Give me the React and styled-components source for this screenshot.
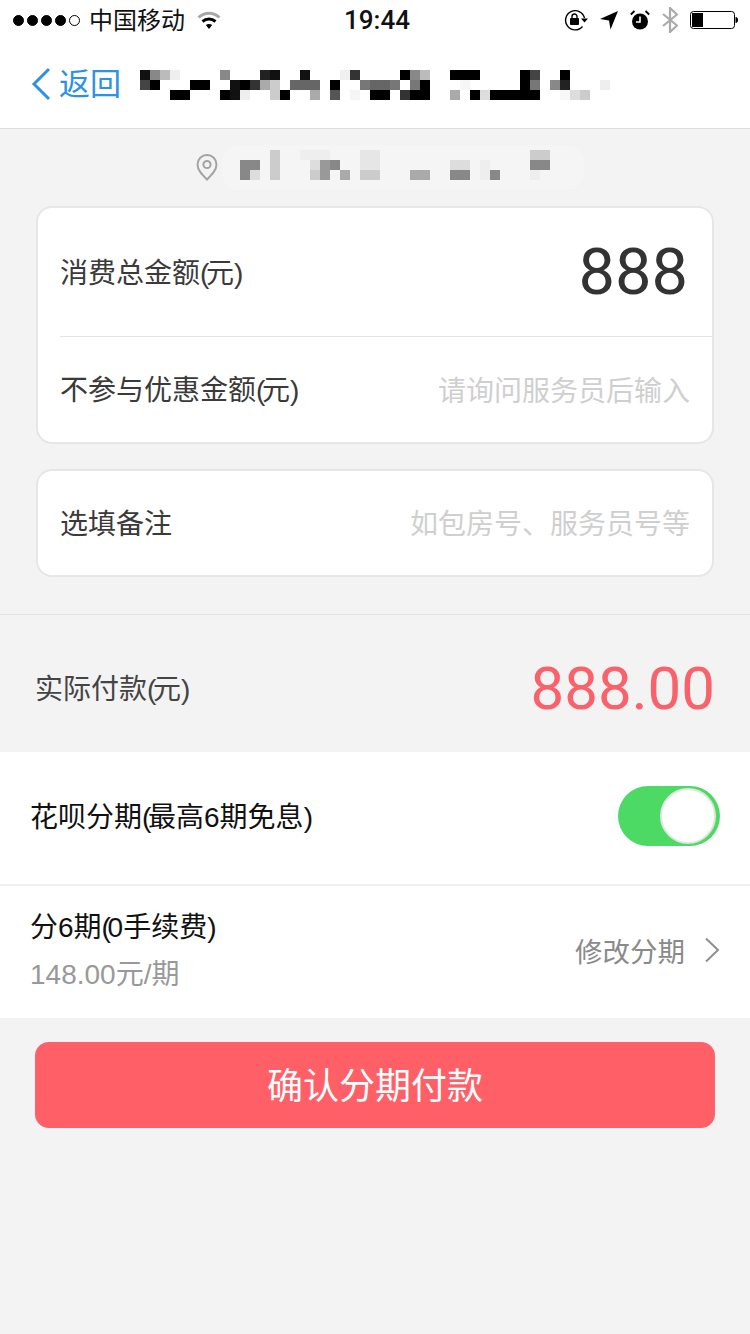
import styled, { createGlobalStyle } from 'styled-components';

const GlobalStyle = createGlobalStyle`
  html, body {
    margin: 0;
    padding: 0;
    background: #f3f3f3;
    font-family: "Liberation Sans", "Noto Sans CJK SC", sans-serif;
  }
  * {
    box-sizing: border-box;
  }
`;

// [x, y, color] cells of the pixelated name, 10px each, origin at (140, 70)
const titleCells = [
  [140, 70, '#111'], [150, 70, '#888'], [160, 70, '#bbb'], [170, 70, '#eee'],
  [220, 70, '#888'], [260, 70, '#222'], [270, 70, '#111'], [300, 70, '#111'], [340, 70, '#f0f0f0'], [350, 70, '#333'],
  [400, 70, '#000'], [410, 70, '#888'], [420, 70, '#bbb'],
  [450, 70, '#000'], [460, 70, '#000'], [470, 70, '#000'], [520, 70, '#000'], [530, 70, '#444'], [560, 70, '#000'],
  [140, 80, '#444'], [150, 80, '#000'], [190, 80, '#000'], [200, 80, '#000'], [230, 80, '#111'], [240, 80, '#000'],
  [250, 80, '#333'], [260, 80, '#aaa'], [270, 80, '#ccc'], [290, 80, '#666'], [300, 80, '#666'], [310, 80, '#666'],
  [330, 80, '#000'], [360, 80, '#777'], [370, 80, '#666'], [380, 80, '#666'], [390, 80, '#777'], [410, 80, '#777'], [420, 80, '#000'],
  [460, 80, '#f6f6f6'], [520, 80, '#000'], [530, 80, '#777'], [550, 80, '#888'], [560, 80, '#222'], [600, 80, '#eee'],
  [170, 90, '#000'], [180, 90, '#000'], [220, 90, '#000'], [230, 90, '#111'], [240, 90, '#eee'], [270, 90, '#ccc'],
  [280, 90, '#000'], [310, 90, '#aaa'], [330, 90, '#555'], [350, 90, '#f5f5f5'], [370, 90, '#000'], [380, 90, '#000'],
  [400, 90, '#333'], [410, 90, '#000'], [420, 90, '#000'], [450, 90, '#aaa'], [470, 90, '#000'], [480, 90, '#ddd'],
  [490, 90, '#000'], [500, 90, '#000'], [510, 90, '#000'], [520, 90, '#000'], [530, 90, '#000'],
  [560, 90, '#f8f8f8'], [570, 90, '#ddd'], [580, 90, '#ccc'],
];

// same for the address
const addressCells = [
  [270, 150, '#ccc'], [300, 150, '#eee'], [310, 150, '#eee'], [320, 150, '#eee'], [360, 150, '#e6e6e6'], [370, 150, '#e6e6e6'], [530, 150, '#ccc'], [540, 150, '#ccc'],
  [240, 160, '#888'], [250, 160, '#888'], [270, 160, '#ccc'], [310, 160, '#ddd'], [320, 160, '#999'], [330, 160, '#888'],
  [360, 160, '#e6e6e6'], [370, 160, '#e6e6e6'], [450, 160, '#ddd'], [460, 160, '#ddd'], [480, 160, '#eee'], [530, 160, '#888'], [540, 160, '#888'],
  [240, 170, '#888'], [250, 170, '#ddd'], [270, 170, '#ccc'], [310, 170, '#ccc'], [320, 170, '#999'], [340, 170, '#aaa'],
  [360, 170, '#ccc'], [370, 170, '#ccc'], [410, 170, '#aaa'], [420, 170, '#aaa'], [450, 170, '#888'], [460, 170, '#888'], [480, 170, '#eee'], [490, 170, '#888'], [530, 170, '#eee'],
];

const Page = styled.div`
  width: 750px;
  min-height: 1334px;
  background: #f3f3f3;
`;

const Header = styled.header`
  background: #fff;
  border-bottom: 1px solid #dedede;
`;

const StatusBar = styled.div`
  height: 40px;
  padding: 0 12px 0 13px;
  display: grid;
  grid-template-columns: 331px auto 1fr;
  align-items: center;
`;

const StatusLeft = styled.div`
  display: flex;
  align-items: center;
`;

const SignalDot = styled.span`
  width: 11px;
  height: 11px;
  margin-right: 3px;
  border-radius: 50%;
  background: ${(p) => (p.$off ? 'transparent' : '#000')};
  border: 1px solid #000;
`;

const Carrier = styled.span`
  margin: 0 12px 3px 6px;
  font-size: 24px;
  color: #111;
`;

const Clock = styled.span`
  font-family: "Roboto", sans-serif;
  font-size: 26px;
  font-weight: 500;
  color: #111;
`;

const StatusRight = styled.div`
  display: flex;
  align-items: center;
  justify-content: flex-end;
  gap: 12px;
`;

const NavBar = styled.nav`
  height: 88px;
  padding-left: 31px;
  display: flex;
  align-items: center;
`;

const BackLink = styled.a`
  display: flex;
  align-items: center;
  gap: 8px;
  width: 109px;
  font-size: 31px;
  color: #2b92e4;
`;

const BackLabel = styled.span`
  margin-bottom: 6px;
`;

const Mosaic = styled.svg`
  display: block;
  flex: none;
`;

const TitleMosaic = styled(Mosaic)`
  margin-top: 2px;
`;

const AddressBand = styled.div`
  height: 77px;
  padding-left: 196px;
  display: flex;
  align-items: center;
  gap: 4px;
`;

const Card = styled.section`
  margin: 0 36px ${(p) => p.$gap || 0}px;
  background: #fff;
  border: 2px solid #e6e6e6;
  border-radius: 16px;
  overflow: hidden;
`;

const FieldRow = styled.div`
  height: ${(p) => p.$height}px;
  margin-left: 22px;
  padding-right: 22px;
  display: flex;
  align-items: center;
  justify-content: space-between;
  border-bottom: ${(p) => (p.$divided ? '1px solid #e4e4e4' : '0')};
`;

const FieldLabel = styled.span`
  margin-bottom: 3px;
  font-size: 28px;
  color: #3a3a3a;
`;

const Paren = styled.span`
  letter-spacing: -3.300px;
`;

const Placeholder = styled.span`
  margin-bottom: 2px;
  font-size: 28px;
  color: #cfcfcf;
`;

const Amount = styled.span`
  margin-right: 2px;
  font-family: "Roboto", sans-serif;
  font-size: 65px;
  font-weight: 400;
  color: #333;
`;

const TotalRow = styled.div`
  height: 138px;
  margin-top: 37px;
  padding: 0 35px;
  display: flex;
  align-items: center;
  justify-content: space-between;
  border-top: 1px solid #e4e4e4;
`;

const TotalLabel = styled.span`
  margin-top: 6px;
  font-size: 28px;
  color: #444;
`;

const TotalValue = styled.span`
  margin-top: 10px;
  font-family: "Roboto", sans-serif;
  font-size: 60px;
  font-weight: 400;
  color: #f9626b;
`;

const InstallmentPanel = styled.section`
  background: #fff;
`;

const SwitchRow = styled.div`
  height: 134px;
  padding: 0 30px 4px;
  display: flex;
  align-items: center;
  justify-content: space-between;
  border-bottom: 2px solid #efefef;
`;

const RowTitle = styled.span`
  font-size: 28px;
  color: #111;
`;

const SwitchTitle = styled(RowTitle)`
  margin-bottom: 2px;
`;

const Toggle = styled.span`
  position: relative;
  width: 102px;
  height: 60px;
  border-radius: 30px;
  background: #4cd964;
`;

const ToggleKnob = styled.span`
  position: absolute;
  top: 2px;
  right: 4px;
  width: 56px;
  height: 56px;
  border-radius: 50%;
  background: #fff;
  border: 2px solid #dfe5df;
`;

const PlanRow = styled.div`
  height: 132px;
  padding: 0 30px;
  display: flex;
  align-items: center;
  justify-content: space-between;
`;

const PlanText = styled.div`
  margin-bottom: 7px;
  display: flex;
  flex-direction: column;
  gap: 7px;
`;

const PlanPrice = styled.span`
  font-size: 28px;
  color: #999;
`;

const EditLink = styled.a`
  margin-bottom: 4px;
  display: flex;
  align-items: center;
  gap: 19px;
  font-size: 27.500px;
  color: #8a8a8a;
`;

const ConfirmButton = styled.button`
  display: block;
  width: 680px;
  height: 86px;
  margin: 24px 35px 0;
  padding: 0 0 4px;
  border: 0;
  border-radius: 14px;
  background: #ff6067;
  color: #fff;
  font-family: inherit;
  font-size: 36px;
`;

const MosaicCells = ({ as: Tag = Mosaic, cells, x, y, width, height, patch }) => (
  <Tag width={width} height={height} viewBox={`${x} ${y} ${width} ${height}`}>
    {patch && <rect x={x} y={y} width={width} height={height} rx="18" fill={patch} />}
    {cells.map(([cx, cy, fill]) => (
      <rect key={`${cx}-${cy}`} x={cx} y={cy} width="10" height="10" fill={fill} />
    ))}
  </Tag>
);

const WifiIcon = () => (
  <svg width="24" height="18" viewBox="0 0 24 18">
    <path d="M1.500 6.500C7.500 .8 16.500 .8 22.500 6.500" fill="none" stroke="#a8a8a8" strokeWidth="3" />
    <path d="M5.500 10.500C9.300 7.300 14.700 7.300 18.500 10.500" fill="none" stroke="#000" strokeWidth="3" />
    <path d="M8.800 14C10.800 12.500 13.200 12.500 15.200 14L12 18z" fill="#000" />
  </svg>
);

const RotationLockIcon = () => (
  <svg width="24" height="22" viewBox="0 0 24 22">
    <path d="M20.500 9A9.600 9.600 0 1 0 18.500 17.500" fill="none" stroke="#000" strokeWidth="1.400" />
    <path d="M17 9.500h7l-3.500 4z" fill="#000" />
    <rect x="6" y="9" width="9" height="7" rx="1" fill="#000" />
    <path d="M8 9.500V7.500a2.500 2.500 0 0 1 5 0v2" fill="none" stroke="#000" strokeWidth="1.400" />
  </svg>
);

const LocationIcon = () => (
  <svg width="18" height="19" viewBox="0 0 18 19">
    <path d="M18 0 10.500 18.500 9 9.500 0 8z" fill="#000" />
  </svg>
);

const AlarmIcon = () => (
  <svg width="20" height="20" viewBox="0 0 20 20">
    <circle cx="10" cy="11.500" r="8" fill="#000" />
    <path d="M10 6.500v5.500H6" fill="none" stroke="#fff" strokeWidth="1.600" />
    <path d="M.8 4.500 4.500 1M19.200 4.500 15.500 1" fill="none" stroke="#000" strokeWidth="1.800" />
  </svg>
);

const BluetoothIcon = () => (
  <svg width="16" height="26" viewBox="0 0 16 26">
    <path d="M1 7 15 18.500 8 25V1l7 6.500L1 19" fill="none" stroke="#aaa" strokeWidth="2.200" />
  </svg>
);

const BatteryIcon = () => (
  <svg width="48" height="20" viewBox="0 0 48 20">
    <rect x=".5" y="1.500" width="44" height="17" rx="3" fill="none" stroke="#000" />
    <rect x="2" y="3" width="11" height="14" fill="#000" />
    <path d="M45.500 7c2 0 2.500 1.500 2.500 3s-.5 3-2.500 3z" fill="#000" />
  </svg>
);

const BackChevron = () => (
  <svg width="20" height="34" viewBox="0 0 20 34">
    <path d="M18 2 3 17l15 15" fill="none" stroke="#2b92e4" strokeWidth="3" />
  </svg>
);

const PinIcon = () => (
  <svg width="22" height="27" viewBox="0 0 22 27">
    <path d="M11 25.500C6 20.500 1.500 16 1.500 10.500a9.500 9.500 0 0 1 19 0C20.500 16 16 20.500 11 25.500z" fill="none" stroke="#a3a3a3" strokeWidth="2" />
    <circle cx="11" cy="10.500" r="3.600" fill="none" stroke="#a3a3a3" strokeWidth="2" />
  </svg>
);

const RowChevron = () => (
  <svg width="16" height="26" viewBox="0 0 16 26">
    <path d="M2 1.500 14 13 2 24.500" fill="none" stroke="#8f8f8f" strokeWidth="2" />
  </svg>
);

export default function App() {
  return (
    <Page>
      <GlobalStyle />
      <Header>
        <StatusBar>
          <StatusLeft>
            <SignalDot />
            <SignalDot />
            <SignalDot />
            <SignalDot />
            <SignalDot $off />
            <Carrier>中国移动</Carrier>
            <WifiIcon />
          </StatusLeft>
          <Clock>19:44</Clock>
          <StatusRight>
            <RotationLockIcon />
            <LocationIcon />
            <AlarmIcon />
            <BluetoothIcon />
            <BatteryIcon />
          </StatusRight>
        </StatusBar>
        <NavBar>
          <BackLink>
            <BackChevron />
            <BackLabel>返回</BackLabel>
          </BackLink>
          <MosaicCells as={TitleMosaic} cells={titleCells} x={140} y={70} width={480} height={30} />
        </NavBar>
      </Header>
      <AddressBand>
        <PinIcon />
        <MosaicCells cells={addressCells} x={222} y={145} width={362} height={45} patch="#f5f5f5" />
      </AddressBand>
      <Card $gap={25}>
        <FieldRow $height={129} $divided>
          <FieldLabel>消费总金额<Paren>(</Paren>元<Paren>)</Paren></FieldLabel>
          <Amount>888</Amount>
        </FieldRow>
        <FieldRow $height={105}>
          <FieldLabel>不参与优惠金额<Paren>(</Paren>元<Paren>)</Paren></FieldLabel>
          <Placeholder>请询问服务员后输入</Placeholder>
        </FieldRow>
      </Card>
      <Card>
        <FieldRow $height={104}>
          <FieldLabel>选填备注</FieldLabel>
          <Placeholder>如包房号、服务员号等</Placeholder>
        </FieldRow>
      </Card>
      <TotalRow>
        <TotalLabel>实际付款<Paren>(</Paren>元<Paren>)</Paren></TotalLabel>
        <TotalValue>888.00</TotalValue>
      </TotalRow>
      <InstallmentPanel>
        <SwitchRow>
          <SwitchTitle>花呗分期<Paren>(</Paren>最高6期免息<Paren>)</Paren></SwitchTitle>
          <Toggle>
            <ToggleKnob />
          </Toggle>
        </SwitchRow>
        <PlanRow>
          <PlanText>
            <RowTitle>分6期<Paren>(</Paren>0手续费<Paren>)</Paren></RowTitle>
            <PlanPrice>148.00元/期</PlanPrice>
          </PlanText>
          <EditLink>
            修改分期
            <RowChevron />
          </EditLink>
        </PlanRow>
      </InstallmentPanel>
      <ConfirmButton>确认分期付款</ConfirmButton>
    </Page>
  );
}
